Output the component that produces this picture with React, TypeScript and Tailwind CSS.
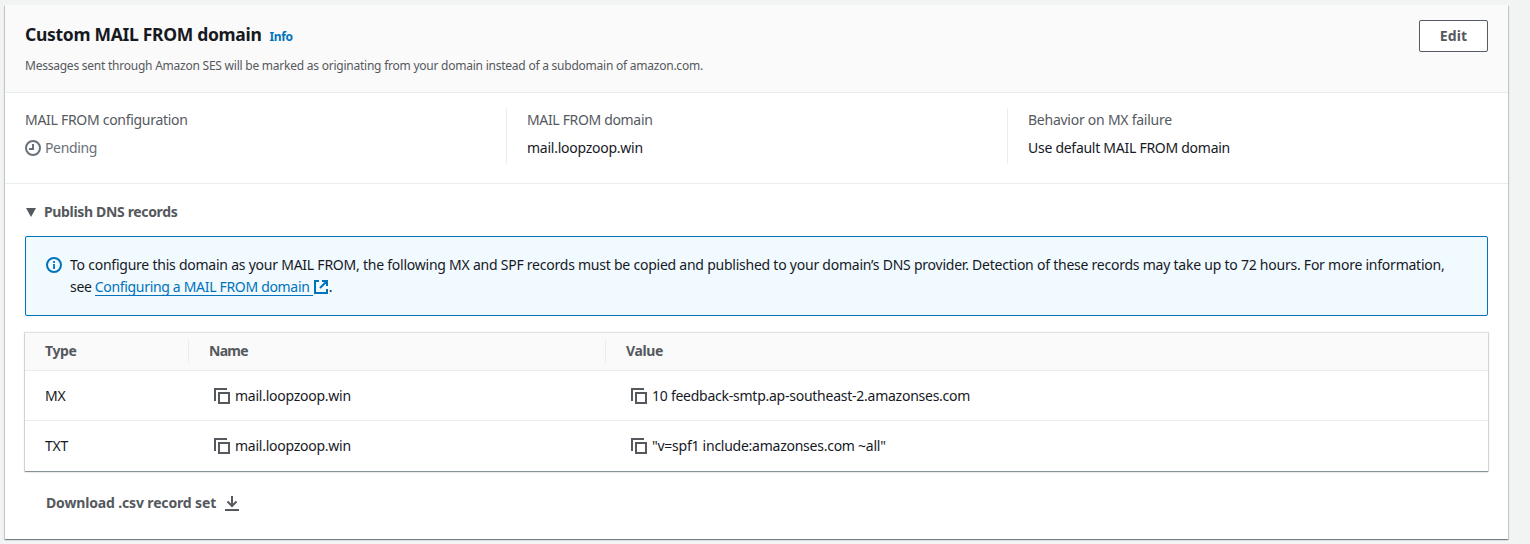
import type { ReactNode } from "react";

const ClockIcon = () => (
  <svg className="h-4 w-4 shrink-0" viewBox="0 0 16 16" fill="none" stroke="currentColor" strokeWidth="2">
    <circle cx="8" cy="8" r="7" />
    <path d="M8 4v5H4" />
  </svg>
);

const InfoIcon = () => (
  <svg className="h-4 w-4 shrink-0" viewBox="0 0 16 16" fill="none" stroke="currentColor" strokeWidth="2">
    <circle cx="8" cy="8" r="7" />
    <path d="M8 7v5M8 4v2" strokeWidth="1.8" />
  </svg>
);

const CopyIcon = () => (
  <svg className="h-4 w-4 shrink-0 text-[#55595e]" viewBox="0 0 16 16" fill="none" stroke="currentColor" strokeWidth="2">
    <path d="M5 5h10v10H5z" />
    <path d="M1 13V1h12" />
  </svg>
);

const ExternalIcon = () => (
  <svg className="h-4 w-4 shrink-0" viewBox="0 0 16 16" fill="none" stroke="currentColor" strokeWidth="2">
    <path d="M6 2H2v12h12v-4M9 2h5v5M14 2L7 9" />
  </svg>
);

const DownloadIcon = () => (
  <svg className="h-4 w-4 shrink-0" viewBox="0 0 16 16" fill="none" stroke="currentColor" strokeWidth="2">
    <path d="M1 15h14M8 1v10M3.5 6.5L8 11l4.5-4.5" />
  </svg>
);

const CopyCell = ({ children }: { children: ReactNode }) => (
  <div className="flex items-center gap-[5px] pl-[5px]">
    <CopyIcon />
    <span>{children}</span>
  </div>
);

const rows = [
  { type: "MX", value: "10 feedback-smtp.ap-southeast-2.amazonses.com" },
  { type: "TXT", value: '"v=spf1 include:amazonses.com ~all"' },
];

export default function App() {
  return (
    <div className="h-[544px] overflow-hidden bg-[#f2f3f3] pt-[5px] pl-[5px] font-['Noto_Sans',sans-serif] text-[14px] leading-[22px] tracking-[-0.25px] whitespace-nowrap text-[#16191f]">
      <section className="h-[534px] w-[1503px] bg-white shadow-[0_1px_1px_0_rgba(0,28,36,0.35),1px_1px_1px_0_rgba(0,28,36,0.15),-1px_1px_1px_0_rgba(0,28,36,0.15)]">
        <header className="flex h-[88px] items-start justify-between border-b border-[#eaeded] bg-[#fafafa] px-5">
          <div className="pt-[17px]">
            <div className="flex items-baseline">
              <h2 className="text-[17.5px] leading-[24px] font-bold tracking-[-0.3px]">Custom MAIL FROM domain</h2>
              <a className="ml-2 text-[12px] font-bold tracking-[-0.4px] text-[#0073bb]">Info</a>
            </div>
            <p className="pt-[7px] text-[12px] tracking-[-0.235px] text-[#55595e]">
              Messages sent through Amazon SES will be marked as originating from your domain instead of a subdomain of amazon.com.
            </p>
          </div>
          <button className="mt-[15px] h-8 w-[69px] rounded-[2px] border border-[#545b64] bg-white font-bold tracking-[0.1px] text-[#55595e]">Edit</button>
        </header>

        <div className="flex h-[91px] border-b border-[#eaeded] pt-[15px] pl-5">
          <div className="h-14 w-[481px]">
            <div className="pt-px tracking-[-0.29px] text-[#55595e]">MAIL FROM configuration</div>
            <div className="flex items-center gap-1 pt-[6px] text-[#687078]">
              <ClockIcon />
              <span className="tracking-[-0.36px]">Pending</span>
            </div>
          </div>
          <div className="h-14 w-[501px] border-l border-[#eaeded] pl-5">
            <div className="pt-px tracking-[-0.34px] text-[#55595e]">MAIL FROM domain</div>
            <div className="pt-[6px]">mail.loopzoop.win</div>
          </div>
          <div className="h-14 border-l border-[#eaeded] pl-5">
            <div className="pt-px text-[#55595e]">Behavior on MX failure</div>
            <div className="pt-[6px] tracking-[-0.27px]">Use default MAIL FROM domain</div>
          </div>
        </div>

        <div className="px-5 pt-[17px]">
          <div className="flex items-center font-bold text-[#55595e]">
            <svg className="mr-[8px] ml-[1px] h-[9px] w-[10px]" viewBox="0 0 10 9">
              <path d="M0 0h10L5 9z" fill="currentColor" />
            </svg>
            <span className="tracking-[-0.34px]">Publish DNS records</span>
          </div>

          <div className="mt-[13px] flex h-20 rounded-[2px] border border-[#0073bb] bg-[#f1faff] pt-[17px] pl-5">
            <div className="pt-[3px] text-[#0073bb]">
              <InfoIcon />
            </div>
            <div className="ml-2">
              <div className="tracking-[-0.236px]">
                To configure this domain as your MAIL FROM, the following MX and SPF records must be copied and published to your domain’s DNS provider. Detection of these records may take up to 72 hours. For more information,
              </div>
              <div className="flex items-center">
                <span className="mr-[3px]">see</span>
                <a className="flex items-center text-[#0073bb]">
                  <span className="h-[18px] w-[218px] border-b border-[#0073bb] leading-[18px] tracking-[-0.32px]">Configuring a MAIL FROM domain</span>
                  <ExternalIcon />
                </a>
                <span>.</span>
              </div>
            </div>
          </div>

          <div className="mt-[17px] h-[138px] shadow-[0_1px_1px_0_rgba(0,28,36,0.4),0_0_1px_1px_rgba(0,28,36,0.13)]">
            <div className="flex h-[38px] items-center border-b border-[#eaeded] bg-[#fafafa] font-bold tracking-[-0.4px] text-[#55595e]">
              <div className="w-[163px] pb-px pl-5">Type</div>
              <div className="w-[417px] border-l border-[#eaeded] pb-px pl-5 tracking-[-0.7px]">Name</div>
              <div className="border-l border-[#eaeded] pb-px pl-5">Value</div>
            </div>
            {rows.map((row, i) => (
              <div key={row.type} className={i === 0 ? "flex h-[50px] items-center border-b border-[#eaeded]" : "flex h-[50px] items-center"}>
                <div className="w-[184px] pl-5">{row.type}</div>
                <div className="w-[417px]">
                  <CopyCell>mail.loopzoop.win</CopyCell>
                </div>
                <CopyCell>{row.value}</CopyCell>
              </div>
            ))}
          </div>

          <div className="flex items-center gap-2 pt-[21px] pl-[21px] font-bold tracking-[-0.15px] text-[#55595e]">
            <span>Download .csv record set</span>
            <DownloadIcon />
          </div>
        </div>
      </section>
    </div>
  );
}
